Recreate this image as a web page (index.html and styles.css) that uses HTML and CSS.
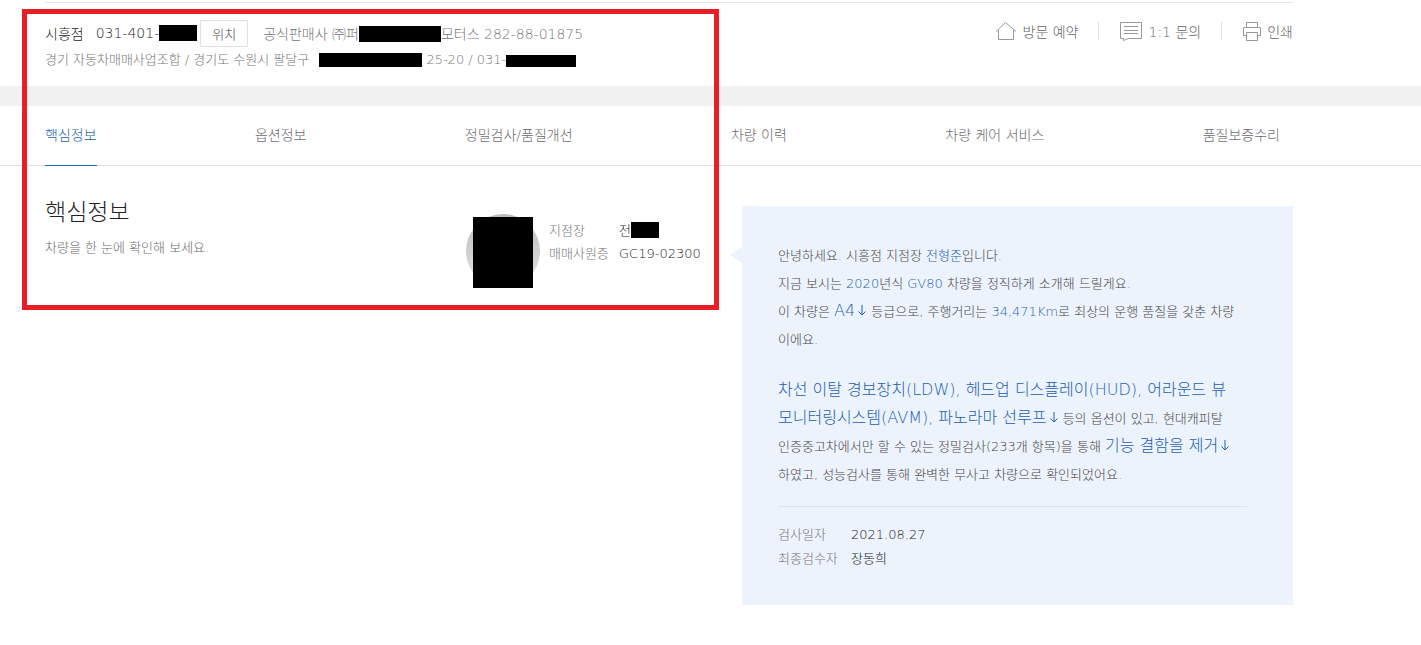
FILE: index.html
```html
<!DOCTYPE html>
<html lang="ko">
  <head>
    <title>핵심정보</title>
    <meta charset="utf-8" />
    <link rel="stylesheet" href="styles.css">
  </head>
  <body>
    <header class="shop">
      <div class="shop-info">
        <div class="shop-row">
          <strong class="shop-name">시흥점</strong>
          <span class="shop-tel">031-401-<span class="mask mask-tel"></span></span>
          <button type="button" class="map-btn">위치</button>
          <span class="dealer">공식판매사 ㈜퍼<span class="mask mask-dealer"></span>모터스 282-88-01875</span>
        </div>
        <p class="address">경기 자동차매매사업조합 / 경기도 수원시 팔달구<span class="mask mask-street"></span> 25-20 / 031-<span class="mask mask-phone"></span></p>
      </div>
      <div class="shop-links">
        <a href="#visit">
          <svg width="22" height="20" viewBox="0 0 22 20"><path d="M1 10.5 L10.5 1.5 L21 10.5 M3.5 9 V18.5 H18.5 V9" /></svg>
          방문 예약
        </a>
        <a href="#ask">
          <svg width="22" height="20" viewBox="0 0 22 20"><path d="M0.5 1.5 H21.5 V17.5 H8.5 L3.5 19.5 V17.5 H0.5 Z M4 5.5 H18 M4 9.5 H18 M4 12.5 H18" /></svg>
          1:1 문의
        </a>
        <a href="#print">
          <svg width="18" height="20" viewBox="0 0 18 20"><path d="M3.5 6.5 V1.5 H14.5 V6.5 M3.5 14.5 H0.5 V6.5 H17.5 V14.5 H14.5 M3.5 11.5 H14.5 V19.5 H3.5 Z" /></svg>
          인쇄
        </a>
      </div>
    </header>

    <nav class="tabs">
      <a href="#summary" class="on">핵심정보</a>
      <a href="#option">옵션정보</a>
      <a href="#inspect">정밀검사/품질개선</a>
      <a href="#history">차량 이력</a>
      <a href="#care">차량 케어 서비스</a>
      <a href="#warranty">품질보증수리</a>
    </nav>

    <main class="summary" id="summary">
      <div class="title">
        <h2>핵심정보</h2>
        <p>차량을 한 눈에 확인해 보세요.</p>
      </div>
      <div class="manager">
        <div class="photo"><span class="mask mask-photo"></span></div>
        <dl>
          <dt>지점장</dt>
          <dd>전<span class="mask mask-name"></span></dd>
          <dt>매매사원증</dt>
          <dd>GC19-02300</dd>
        </dl>
      </div>
      <section class="bubble">
        <p>
          안녕하세요. 시흥점 지점장 <b>전형준</b>입니다.<br />
          지금 보시는 <em>2020</em>년식 <em>GV80</em> 차량을 정직하게 소개해 드릴게요.<br />
          이 차량은 <a href="#grade">A4<svg class="down" width="10" height="12" viewBox="0 0 10 12"><path d="M5 1 V11 M1.5 7.5 L5 11 L8.5 7.5" /></svg></a> 등급으로, 주행거리는 <em>34,471Km</em>로 최상의 운행 품질을 갖춘 차량<br />
          이에요.
        </p>
        <p>
          <a href="#option">차선 이탈 경보장치(LDW), 헤드업 디스플레이(HUD), 어라운드 뷰<br />
          모니터링시스템(AVM), 파노라마 선루프<svg class="down" width="10" height="12" viewBox="0 0 10 12"><path d="M5 1 V11 M1.5 7.5 L5 11 L8.5 7.5" /></svg></a> 등의 옵션이 있고, 현대캐피탈<br />
          인증중고차에서만 할 수 있는 정밀검사(233개 항목)을 통해 <a href="#inspect">기능 결함을 제거<svg class="down" width="10" height="12" viewBox="0 0 10 12"><path d="M5 1 V11 M1.5 7.5 L5 11 L8.5 7.5" /></svg></a><br />
          하였고, 성능검사를 통해 완벽한 무사고 차량으로 확인되었어요.
        </p>
        <dl>
          <dt>검사일자</dt>
          <dd>2021.08.27</dd>
          <dt>최종검수자</dt>
          <dd>장동희</dd>
        </dl>
      </section>
    </main>

    <div class="marker"></div>
  </body>
</html>
```
FILE: styles.css
```css
* {
  box-sizing: border-box;
}
body {
  margin: 0;
  padding-top: 2px;
  position: relative;
  background: #ffffff;
  color: #484848;
  font-family: "DejaVu Sans Light", "DejaVu Sans", "Noto Sans CJK KR", sans-serif;
  font-size: 13px;
  font-weight: 200;
}
h2,
p,
dl,
dd {
  margin: 0;
}
a {
  text-decoration: none;
}
svg {
  fill: none;
  stroke: currentColor;
}

/* Blacked out personal data */
.mask {
  display: inline-block;
  height: 16px;
  background: #000000;
  vertical-align: -3px;
}
.mask-tel {
  width: 38px;
}
.mask-dealer {
  width: 82px;
}
.mask-street {
  width: 103px;
  height: 14px;
  margin-left: 10px;
}
.mask-phone {
  width: 70px;
  height: 12px;
}
.mask-name {
  width: 28px;
}
.mask-photo {
  width: 60px;
  height: 71px;
}

.shop {
  display: flex;
  justify-content: space-between;
  margin: 0 128px 0 45px;
  padding-top: 16px;
  height: 84px;
  border-top: 1px solid #e5e5e5;
  color: #777777;
  white-space: nowrap;
}
.shop-row {
  display: flex;
  align-items: center;
  height: 28px;
  font-size: 14px;
}
.shop-name {
  margin-right: 12px;
  color: #222222;
  font-weight: 300;
}
.shop-tel {
  color: #222222;
}
.map-btn {
  width: 48px;
  height: 27px;
  margin: 0 15px 0 3px;
  padding: 0;
  background: #ffffff;
  border: 1px solid #e0e0e0;
  color: #484848;
  font: inherit;
  font-size: 13px;
}
.address {
  line-height: 26px;
}
.shop-links {
  display: flex;
  align-items: center;
  height: 24px;
  font-size: 14px;
}
.shop-links a {
  display: flex;
  align-items: center;
  gap: 6px;
  color: #666666;
}
.shop-links svg {
  stroke: #999999;
}
.shop-links a + a::before {
  content: "";
  width: 1px;
  height: 18px;
  margin: 0 15px 0 20px;
  background: #dddddd;
}

.tabs {
  display: flex;
  justify-content: space-between;
  padding: 0 141px 0 45px;
  height: 80px;
  border-top: 20px solid #f1f1f1;
  border-bottom: 1px solid #e0e0e0;
}
.tabs a {
  height: 60px;
  color: #6c6c6c;
  font-size: 14px;
  line-height: 58px;
  white-space: nowrap;
}
.tabs .on {
  border-bottom: 1px solid #1f6fb5;
  color: #1f5fae;
}

.summary {
  display: grid;
  grid-template-columns: 421fr 276fr 551fr;
  align-items: start;
  margin: 40px 128px 40px 45px;
}
.title {
  margin-top: -11px;
}
.title h2 {
  color: #222222;
  font-size: 23px;
  font-weight: 200;
  line-height: 34px;
}
.title p {
  margin-top: 8px;
  color: #6c6c6c;
  line-height: 22px;
}
.manager {
  display: flex;
  gap: 9px;
  margin-top: 8px;
}
.photo {
  width: 74px;
  height: 74px;
  padding: 3px 7px 0;
  border-radius: 50%;
  background: linear-gradient(#bbbbbb, #e5e5e5);
}
.photo .mask {
  display: block;
}
.manager dl {
  display: grid;
  grid-template-columns: 62px auto;
  column-gap: 8px;
  align-content: start;
  padding-top: 5px;
  line-height: 23px;
  white-space: nowrap;
}
dt {
  color: #777777;
}
dd {
  color: #222222;
}

/* Speech bubble of the branch manager */
.bubble {
  position: relative;
  padding: 36px 46px 34px 36px;
  background: #ecf3fd;
  line-height: 28px;
  white-space: nowrap;
}
.bubble::before {
  content: "";
  position: absolute;
  top: 41px;
  left: -12px;
  border: solid transparent;
  border-width: 8px 12px 8px 0;
  border-right-color: #ecf3fd;
}
.bubble p + p {
  margin-top: 23px;
}
.bubble b {
  color: #1f5fae;
  font-weight: 300;
}
.bubble em {
  color: #1f5fae;
  font-style: normal;
}
.bubble a {
  color: #1f5fae;
  font-size: 16px;
  line-height: 20px;
}
.down {
  margin-left: 2px;
}
.bubble dl {
  display: grid;
  grid-template-columns: 65px auto;
  column-gap: 8px;
  margin-top: 17px;
  padding-top: 16px;
  border-top: 1px solid #dbe3ee;
  line-height: 24px;
}

/* Red frame laid over the page */
.marker {
  position: absolute;
  top: 9px;
  left: 22px;
  width: 697px;
  height: 301px;
  border: 5px solid #e81e25;
  pointer-events: none;
}
```
